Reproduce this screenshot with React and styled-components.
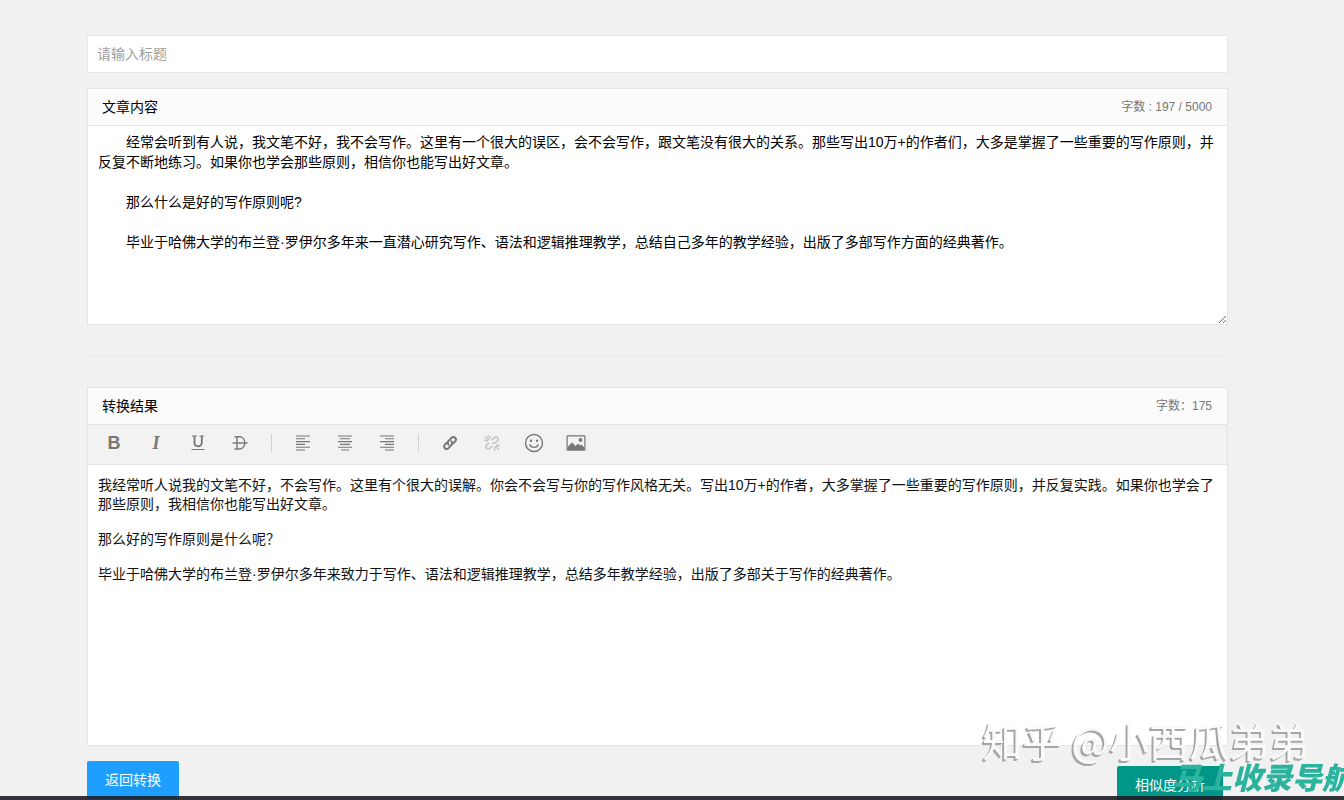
import React, { useState } from 'react';
import styled, { createGlobalStyle } from 'styled-components';

const GlobalStyle = createGlobalStyle`
	* {
		box-sizing: border-box;
	}

	html {
		scrollbar-width: none;
		background-color: #f1f1f1;
	}

	body {
		margin: 0;
		font-family: 'Liberation Sans', 'Noto Sans CJK SC', sans-serif;
		font-size: 14px;
		line-height: 20px;
		color: #000;
	}

	button, input, textarea {
		font: inherit;
	}
`

const Page = styled.main`
	display: flex;
	flex-direction: column;
	padding: 35px 116px 0 87px;

	@media only screen and (max-width: 768px) {
		padding: 20px 16px;
	}
`

const TitleInput = styled.input`
	width: 100%;
	height: 38px;
	padding: 0 9px;
	margin-bottom: 15px;
	border: 1px solid #e6e6e6;
	background-color: #fff;
	outline: none;

	&::placeholder {
		color: #a0a0a0;
	}
`

const Panel = styled.section`
	display: flex;
	flex-direction: column;
	border: 1px solid #e4e4e4;
	background-color: #fff;
`

const PanelHeader = styled.header`
	display: flex;
	align-items: center;
	justify-content: space-between;
	height: 37px;
	padding: 0 15px 0 14px;
	border-bottom: 1px solid #e4e4e4;
	background-color: #fbfbfb;
`

const PanelTitle = styled.h2`
	margin: 0;
	font-size: 14px;
	font-weight: 400;
`

const Count = styled.span`
	font-size: 12px;
	color: #777;
`

const Article = styled.textarea`
	display: block;
	width: 100%;
	height: 198px;
	padding: 6px 10px;
	border: none;
	outline: none;
	resize: vertical;
	color: #000;
	line-height: 20px;
`

const Divider = styled.hr`
	width: 100%;
	height: 1px;
	margin: 31px 0 30px;
	border: none;
	background-color: #e7e7e7;
`

const Toolbar = styled.div`
	display: flex;
	align-items: center;
	height: 40px;
	padding: 0 5px 3px;
	border-bottom: 1px solid #e4e4e4;
	background-color: #f2f2f2;
`

const Tool = styled.button`
	display: flex;
	align-items: center;
	justify-content: center;
	width: 42px;
	height: 30px;
	padding: 0;
	border: none;
	background: none;
	color: #777;
	opacity: ${props => (props.disabled ? 0.4 : 1)};
	cursor: pointer;
`

const Letter = styled.span`
	font-family: ${props => (props.$sans ? "'Liberation Sans', sans-serif" : "'Liberation Serif', serif")};
	font-size: 18px;
	font-weight: 700;
	font-style: ${props => (props.$italic ? 'italic' : 'normal')};
`

const Separator = styled.span`
	width: 1px;
	height: 18px;
	margin: 0 10px;
	background-color: #d2d2d2;
`

const Editor = styled.div`
	min-height: 280px;
	padding: 11px 10px;
	line-height: 19px;
	color: #111;
	outline: none;

	p {
		margin: 0 0 16px;
	}
`

const Actions = styled.div`
	display: flex;
	justify-content: space-between;
	align-items: flex-start;
	padding: 15px 5px 0 0;
`

const Action = styled.button`
	height: 38px;
	padding: 0 18px;
	border: none;
	border-radius: 2px;
	background-color: ${props => props.$color};
	color: #fff;
	cursor: pointer;
`

const CompareAction = styled(Action)`
	margin-top: 5px;
`

const BottomBar = styled.div`
	position: fixed;
	left: 0;
	right: 0;
	bottom: 0;
	height: 4px;
	background-color: rgba(30, 30, 38, 0.9);
`

const Signature = styled.div`
	position: fixed;
	right: 35px;
	bottom: 31px;
	font-family: 'Noto Sans CJK SC', sans-serif;
	font-size: 40px;
	line-height: 58px;
	white-space: nowrap;
	color: #fafafa;
	text-shadow: -1px 1px 0 #a4a4a4, -2px 2px 0 #a8a8a8;
	pointer-events: none;
`

const SiteMark = styled.div`
	position: fixed;
	right: -8px;
	bottom: 4px;
	font-family: 'Noto Sans CJK SC', sans-serif;
	font-size: 30px;
	font-weight: 900;
	font-style: italic;
	line-height: 40px;
	white-space: nowrap;
	color: #2bb39d;
	pointer-events: none;
`

const UnderlineIcon = () => (
	<svg width='14' height='16' viewBox='0 0 14 16' fill='none' stroke='currentColor'>
		<path d='M3.5 1V7.5C3.5 12.5 10.8 12.5 10.8 7.5V1' strokeWidth='1.8' />
		<path d='M1 1H6M8.5 1H13M0.5 14.5H13.5' strokeWidth='1.2' />
	</svg>
)

const StrikeIcon = () => (
	<svg width='16' height='16' viewBox='0 0 16 16' fill='none' stroke='currentColor' strokeWidth='1.4'>
		<path d='M2.5 1.7H7C14.8 1.7 14.8 14 7 14H2.5M5 1.7V14' />
		<path d='M0.5 8H15.5' />
	</svg>
)

const alignLines = {
	left: 'M1 1H15M1 3.8H10M1 6.6H15M1 9.4H10M1 12.2H15M1 15H10',
	center: 'M1 1H15M3 3.8H13M1 6.6H15M3 9.4H13M1 12.2H15M4 15H12',
	right: 'M1 1H15M6 3.8H15M1 6.6H15M6 9.4H15M1 12.2H15M6 15H15',
}

const AlignIcon = ({ align }) => (
	<svg width='16' height='16' viewBox='0 0 16 16' stroke='currentColor' strokeWidth='1.1'>
		<path d={alignLines[align]} />
	</svg>
)

const LinkIcon = () => (
	<svg width='16' height='16' viewBox='0 0 16 16' fill='none' stroke='currentColor' strokeWidth='2' strokeLinecap='round'>
		<path d='M6.6 9.6C5.4 8.4 5.5 7 6.5 6L9.5 2.9C10.6 1.8 12.1 1.8 13.1 2.8C14.2 3.9 14.1 5.4 13.1 6.4L11.4 8.1' />
		<path d='M9.4 6.4C10.6 7.6 10.5 9 9.5 10L6.5 13.1C5.4 14.2 3.9 14.2 2.9 13.2C1.8 12.1 1.9 10.6 2.9 9.6L4.6 7.9' />
	</svg>
)

const UnlinkIcon = () => (
	<svg width='16' height='16' viewBox='0 0 16 16' fill='none' stroke='currentColor' strokeWidth='1.4' strokeLinecap='round'>
		<path d='M8.2 4.8L10.2 2.8C11.2 1.9 12.6 2 13.4 2.8C14.2 3.6 14.2 4.9 13.3 5.9L11.4 7.8C10.6 8.5 9.6 8.5 8.8 8' />
		<path d='M4.6 8.2L2.8 10.1C1.8 11.1 1.9 12.5 2.7 13.3C3.6 14.1 4.9 14.1 5.9 13.2L7.8 11.3' />
		<path d='M5.2 0.8L5.8 3.4M0.8 5.2L3.6 5.8M1.8 1.8L4.4 4.4M10.8 15.2L10.2 12.6M15.2 10.8L12.6 10.2M14.2 14.2L11.6 11.6' />
	</svg>
)

const SmileIcon = () => (
	<svg width='20' height='20' viewBox='0 0 20 20' fill='none' stroke='currentColor' strokeWidth='1.4' strokeLinecap='round'>
		<circle cx='10' cy='10' r='8.5' />
		<path d='M5.8 11.8C7.2 15.2 12.8 15.2 14.2 11.8' />
		<circle cx='7' cy='7.8' r='1.2' fill='currentColor' stroke='none' />
		<circle cx='13' cy='7.8' r='1.2' fill='currentColor' stroke='none' />
	</svg>
)

const ImageIcon = () => (
	<svg width='20' height='16' viewBox='0 0 20 16' fill='currentColor'>
		<rect x='1.1' y='0.8' width='17.8' height='14.4' rx='0.6' fill='none' stroke='currentColor' strokeWidth='1.2' />
		<path d='M1.5 15V12L6.2 7.2L9.4 11L12 8.8L14 10.5L15.3 9.5L18.5 12.6V15Z' />
		<circle cx='14.5' cy='5' r='1.9' />
	</svg>
)

const article = `　　经常会听到有人说，我文笔不好，我不会写作。这里有一个很大的误区，会不会写作，跟文笔没有很大的关系。那些写出10万+的作者们，大多是掌握了一些重要的写作原则，并反复不断地练习。如果你也学会那些原则，相信你也能写出好文章。

　　那么什么是好的写作原则呢?

　　毕业于哈佛大学的布兰登·罗伊尔多年来一直潜心研究写作、语法和逻辑推理教学，总结自己多年的教学经验，出版了多部写作方面的经典著作。`;

const App = () => {
	const [title, setTitle] = useState('');
	const [content, setContent] = useState(article);

	return (
		<>
			<GlobalStyle />
			<Page>
				<TitleInput
					aria-label='请输入标题'
					placeholder='请输入标题'
					value={title}
					onChange={e => setTitle(e.target.value)}
				/>
				<Panel>
					<PanelHeader>
						<PanelTitle as='label' htmlFor='article'>文章内容</PanelTitle>
						<Count>字数 : 197 / 5000</Count>
					</PanelHeader>
					<Article id='article' spellCheck={false} value={content} onChange={e => setContent(e.target.value)} />
				</Panel>
				<Divider />
				<Panel>
					<PanelHeader>
						<PanelTitle id='result'>转换结果</PanelTitle>
						<Count>字数：175</Count>
					</PanelHeader>
					<Toolbar role='toolbar'>
						<Tool aria-label='加粗'><Letter $sans>B</Letter></Tool>
						<Tool aria-label='斜体'><Letter $italic>I</Letter></Tool>
						<Tool aria-label='下划线'><UnderlineIcon /></Tool>
						<Tool aria-label='删除线'><StrikeIcon /></Tool>
						<Separator />
						<Tool aria-label='左对齐'><AlignIcon align='left' /></Tool>
						<Tool aria-label='居中对齐'><AlignIcon align='center' /></Tool>
						<Tool aria-label='右对齐'><AlignIcon align='right' /></Tool>
						<Separator />
						<Tool aria-label='插入链接'><LinkIcon /></Tool>
						<Tool aria-label='清除链接' disabled><UnlinkIcon /></Tool>
						<Tool aria-label='表情'><SmileIcon /></Tool>
						<Tool aria-label='图片'><ImageIcon /></Tool>
					</Toolbar>
					<Editor role='textbox' aria-labelledby='result' aria-multiline='true' contentEditable suppressContentEditableWarning spellCheck={false}>
						<p>我经常听人说我的文笔不好，不会写作。这里有个很大的误解。你会不会写与你的写作风格无关。写出10万+的作者，大多掌握了一些重要的写作原则，并反复实践。如果你也学会了那些原则，我相信你也能写出好文章。</p>
						<p>那么好的写作原则是什么呢？</p>
						<p>毕业于哈佛大学的布兰登·罗伊尔多年来致力于写作、语法和逻辑推理教学，总结多年教学经验，出版了多部关于写作的经典著作。</p>
					</Editor>
				</Panel>
				<Actions>
					<Action $color='#1e9fff'>返回转换</Action>
					<CompareAction $color='#009688'>相似度分析</CompareAction>
				</Actions>
			</Page>
			<Signature>知乎 @小西瓜弟弟</Signature>
			<SiteMark>马上收录导航</SiteMark>
			<BottomBar />
		</>
	);
}

export default App;
